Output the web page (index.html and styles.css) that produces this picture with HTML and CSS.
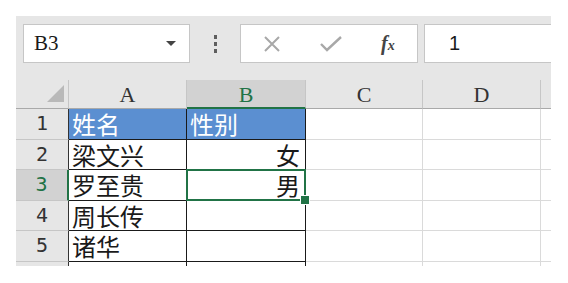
FILE: index.html
```html
<!DOCTYPE html>
<html lang="zh-CN">
<head>
  <meta charset="UTF-8" />
  <title>Sheet</title>
  <link rel="stylesheet" href="styles.css">
</head>
<body>
  <div class="excel">
    <div class="toolbar">
      <div class="namebox">
        <span>B3</span>
        <i class="caret"></i>
      </div>
      <div class="grip"><i></i><i></i><i></i></div>
      <div class="fbtns">
        <svg class="ico" width="20" height="20" viewBox="0 0 20 20">
          <path d="M3 3 L17 17 M17 3 L3 17" stroke="#a8a8a8" stroke-width="2" fill="none" />
        </svg>
        <svg class="ico" width="24" height="20" viewBox="0 0 24 20">
          <path d="M2 10 L8 16 L22 3" stroke="#a8a8a8" stroke-width="2.4" fill="none" />
        </svg>
        <span class="fx">f<small>x</small></span>
      </div>
      <div class="finput">1</div>
    </div>

    <div class="sheet">
      <!-- column headers -->
      <div class="hd corner">
        <svg width="18" height="18" viewBox="0 0 18 18"><polygon points="17,0 17,17 0,17" fill="#b9b9b9" /></svg>
      </div>
      <div class="hd col">A</div>
      <div class="hd col sel">B</div>
      <div class="hd col">C</div>
      <div class="hd col">D</div>
      <div class="hd col edge"></div>

      <!-- row 1 -->
      <div class="hd row">1</div>
      <div class="cell tb head">姓名</div>
      <div class="cell tb head">性别</div>
      <div class="cell"></div>
      <div class="cell"></div>
      <div class="cell"></div>

      <!-- row 2 -->
      <div class="hd row">2</div>
      <div class="cell tb">梁文兴</div>
      <div class="cell tb num">女</div>
      <div class="cell"></div>
      <div class="cell"></div>
      <div class="cell"></div>

      <!-- row 3 -->
      <div class="hd row sel">3</div>
      <div class="cell tb">罗至贵</div>
      <div class="cell tb num active">男</div>
      <div class="cell"></div>
      <div class="cell"></div>
      <div class="cell"></div>

      <!-- row 4 -->
      <div class="hd row">4</div>
      <div class="cell tb">周长传</div>
      <div class="cell tb"></div>
      <div class="cell"></div>
      <div class="cell"></div>
      <div class="cell"></div>

      <!-- row 5 -->
      <div class="hd row">5</div>
      <div class="cell tb">诸华</div>
      <div class="cell tb"></div>
      <div class="cell"></div>
      <div class="cell"></div>
      <div class="cell"></div>

      <!-- row 6 (cut off) -->
      <div class="hd row"></div>
      <div class="cell tb"></div>
      <div class="cell tb"></div>
      <div class="cell"></div>
      <div class="cell"></div>
      <div class="cell"></div>
    </div>
  </div>
</body>
</html>
```

FILE: styles.css
```css
:root {
  --chrome: #e6e6e6;
  --hd-bg: #e6e6e6;
  --hd-line: #c6c6c6;
  --hd-sel: #d2d2d2;
  --grid: #dadada;
  --green: #217346;
  --blue: #5b8fd1;
  --ink: #1a1a1a;
}

* {
  box-sizing: border-box;
  margin: 0;
  padding: 0;
}

body {
  background: #fff;
  font-family: "Liberation Serif", serif;
  color: var(--ink);
}

.excel {
  margin: 16px 0 0 16px;
  width: 535px;
  height: 250px;
  background: var(--chrome);
  overflow: hidden;
}

/* Formula bar */
.toolbar {
  display: flex;
  align-items: flex-start;
  height: 64px;
  padding: 8px 0 0 7px;
}
.namebox {
  width: 167px;
  height: 39px;
  flex: none;
  background: #fff;
  border: 1px solid var(--hd-line);
  display: flex;
  align-items: center;
  justify-content: space-between;
  padding: 0 13px 0 10px;
  font-family: "Liberation Serif", serif;
  font-size: 21px;
}
.caret {
  width: 0;
  height: 0;
  border-left: 5px solid transparent;
  border-right: 5px solid transparent;
  border-top: 5px solid #444;
}
.grip {
  width: 50px;
  height: 39px;
  flex: none;
  display: flex;
  flex-direction: column;
  align-items: center;
  justify-content: center;
  gap: 3px;
}
.grip i {
  width: 3px;
  height: 4px;
  background: #5e5e5e;
}
.fbtns {
  width: 178px;
  height: 39px;
  flex: none;
  background: #fff;
  border: 1px solid var(--hd-line);
  display: flex;
  align-items: center;
  padding-left: 21px;
}
.fbtns .ico:first-child {
  margin-right: 37px;
}
.fbtns .ico + .ico {
  margin-right: 38px;
}
.fx {
  font-family: "Liberation Serif", serif;
  font-style: italic;
  font-weight: bold;
  font-size: 20px;
  color: #444;
}
.fx small {
  font-size: 14px;
}
.finput {
  width: 200px;
  height: 39px;
  flex: none;
  margin-left: 6px;
  background: #fff;
  border: 1px solid var(--hd-line);
  padding-left: 24px;
  font-family: "Liberation Sans", sans-serif;
  font-size: 20px;
  line-height: 37px;
}

/* Grid */
.sheet {
  display: grid;
  grid-template-columns: 53px 118px 119px 117px 118px 20px;
  grid-template-rows: 29px 31px 30px 31px 30px 31px 10px;
}
.sheet > div {
  border-right: 1px solid var(--grid);
  border-bottom: 1px solid var(--grid);
  background: #fff;
  font-family: "Noto Sans CJK SC", sans-serif;
  font-size: 24px;
  line-height: 29px;
  padding: 0 3px;
  white-space: nowrap;
}
.sheet > .hd {
  background: var(--hd-bg);
  border-right-color: var(--hd-line);
  border-bottom-color: var(--hd-line);
  font-family: "Liberation Serif", serif;
  font-size: 22px;
  color: #333;
  text-align: center;
}
.sheet > .col {
  border-bottom: 1px solid #a9a9a9;
  line-height: 30px;
}
.sheet > .col.sel {
  background: var(--hd-sel);
  color: var(--green);
  border-bottom: 2px solid var(--green);
}
.sheet > .col.edge {
  border-right: none;
}
.sheet > .corner {
  border-bottom: 1px solid #a9a9a9;
  display: flex;
  align-items: flex-end;
  justify-content: flex-end;
  padding: 0 3px 5px 0;
}
.sheet > .row {
  border-right-color: #333;
  font-family: "DejaVu Sans Mono", monospace;
  font-size: 20px;
}
.sheet > .row.sel {
  background: var(--hd-sel);
  color: var(--green);
  border-right: 2px solid var(--green);
}

/* bordered table A1:B6 */
.sheet > .tb {
  border-right-color: #1a1a1a;
  border-bottom-color: #1a1a1a;
}
.sheet > .head {
  background: var(--blue);
  color: #fff;
}
.sheet > .num {
  text-align: right;
  padding-right: 5px;
}
.sheet > .active {
  position: relative;
}
.active::before {
  content: '';
  position: absolute;
  top: -1px;
  left: -1px;
  right: -1px;
  bottom: -1px;
  border: 2px solid var(--green);
}
.active::after {
  content: '';
  position: absolute;
  right: -5px;
  bottom: -5px;
  width: 8px;
  height: 8px;
  background: var(--green);
  border: 1px solid #fff;
}
```
